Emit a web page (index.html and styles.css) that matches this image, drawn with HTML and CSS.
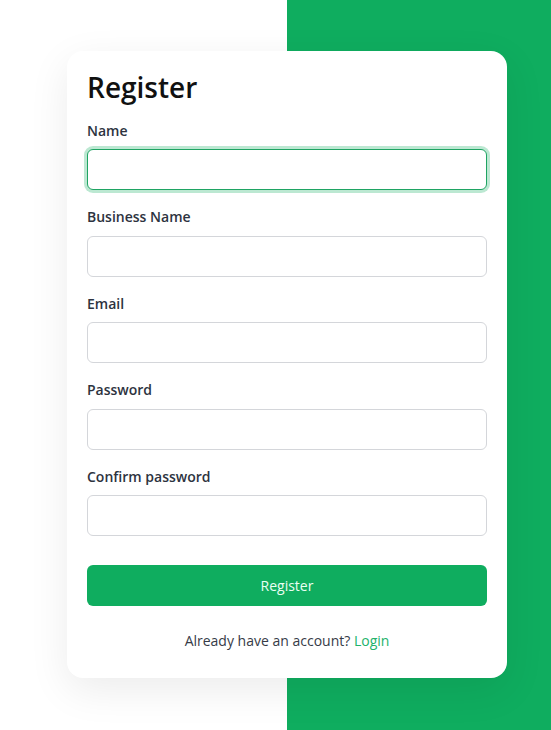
FILE: index.html
```html
<!DOCTYPE html>
<html lang="en">
<head>
<meta charset="utf-8">
<title>Register</title>
<link rel="stylesheet" href="styles.css">
</head>
<body>
<main class="page">
  <form class="card">
    <h1 class="title">Register</h1>
    <div class="field">
      <label class="label" for="name">Name</label>
      <input class="input input-focus" id="name" type="text">
    </div>
    <div class="field">
      <label class="label" for="business">Business Name</label>
      <input class="input" id="business" type="text">
    </div>
    <div class="field">
      <label class="label" for="email">Email</label>
      <input class="input" id="email" type="email">
    </div>
    <div class="field">
      <label class="label" for="password">Password</label>
      <input class="input" id="password" type="password">
    </div>
    <div class="field">
      <label class="label" for="confirm">Confirm password</label>
      <input class="input" id="confirm" type="password">
    </div>
    <button class="button" type="button">Register</button>
    <p class="footer">Already have an account? <a class="link" href="#">Login</a></p>
  </form>
</main>
</body>
</html>
```
FILE: styles.css
```css
* { box-sizing: border-box; }
html, body { margin: 0; padding: 0; }
body {
  font-family: "Open Sans", "Noto Sans", sans-serif;
  background: linear-gradient(to right, #ffffff 0, #ffffff 287px, #0fad5f 287px, #0fad5f 100%);
  min-height: 730px;
}
.page {
  padding: 51px 44px 0 67px;
}
.card {
  width: 440px;
  background: #ffffff;
  border-radius: 16px;
  box-shadow: 0 12px 40px rgba(0, 0, 0, 0.08);
  padding: 20px 20px 27px;
  display: flex;
  flex-direction: column;
}
.title {
  margin: 0 0 15px;
  font-size: 28px;
  line-height: 33.6px;
  font-weight: 600;
  color: #111111;
}
.field {
  display: flex;
  flex-direction: column;
  margin-bottom: 16px;
}
.label {
  font-size: 14px;
  line-height: 21.5px;
  font-weight: 600;
  color: #2d3340;
  margin-bottom: 8px;
}
.input {
  height: 41px;
  border: 1px solid #d4d6da;
  border-radius: 6px;
  background: #ffffff;
  font: inherit;
  padding: 0 12px;
  outline: none;
}
.input-focus {
  border-color: #1fa463;
  box-shadow: 0 0 0 3px rgba(15, 173, 95, 0.28);
}
.button {
  margin-top: 13px;
  height: 41px;
  border: none;
  border-radius: 6px;
  background: #0fad5f;
  color: #eafff3;
  font-family: inherit;
  font-size: 14px;
  font-weight: 500;
}
.footer {
  margin: 24px 0 0;
  text-align: center;
  font-size: 14px;
  line-height: 21px;
  color: #363b47;
}
.link {
  color: #22b26b;
  text-decoration: none;
}
```
